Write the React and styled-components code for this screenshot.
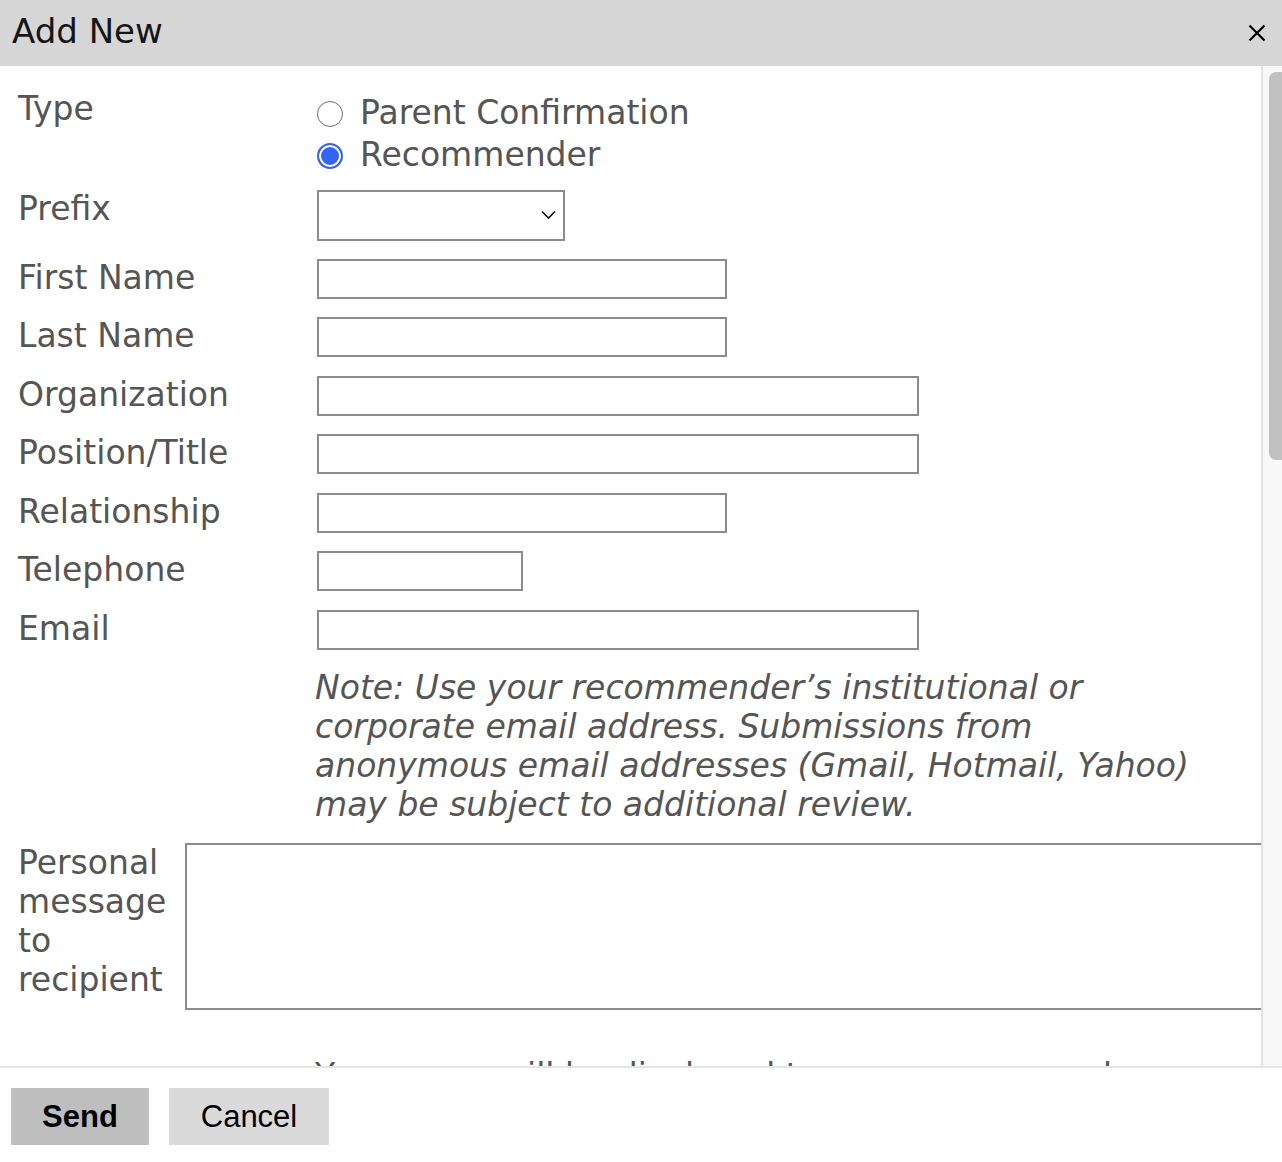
import React from "react";
import styled, { createGlobalStyle } from "styled-components";

const Global = createGlobalStyle`
  html, body { margin: 0; padding: 0; background: #fff; }
  body { font-family: "DejaVu Sans", "Noto Sans", sans-serif; }
  * { box-sizing: border-box; }
`;

const Dialog = styled.div`
  width: 1282px;
  height: 1162px;
  display: flex;
  flex-direction: column;
  background: #fff;
  overflow: hidden;
`;

const Header = styled.div`
  height: 66px;
  flex: none;
  background: #d6d6d6;
  display: flex;
  align-items: center;
  justify-content: space-between;
  padding: 0 16px 4px 12px;
`;

const Title = styled.h1`
  margin: 0;
  font-family: "DejaVu Sans", sans-serif;
  font-weight: normal;
  font-size: 34px;
  color: #151515;
  letter-spacing: 0;
`;

const CloseButton = styled.button`
  border: 0;
  background: transparent;
  padding: 0;
  width: 18px;
  height: 18px;
  margin-top: 4px;
  display: flex;
  cursor: pointer;
`;

const Body = styled.div`
  height: 1000px;
  flex: none;
  display: flex;
`;

const ScrollContent = styled.div`
  flex: 1;
  min-width: 0;
  overflow: hidden;
  padding-top: 24px;
`;

const Rail = styled.div`
  width: 21px;
  flex: none;
  background: #f8f8f8;
  border-left: 2px solid #e2e2e2;
  padding: 6px 0 0 6px;
`;

const Thumb = styled.div`
  width: 13px;
  height: 388px;
  background: #c1c1c1;
  border-radius: 7px 0 0 7px;
`;

const Form = styled.div`
  display: flex;
  flex-direction: column;
  gap: 18.5px;
  color: #555;
  font-size: 33px;
`;

const Row = styled.div`
  display: flex;
  align-items: flex-start;
  margin-bottom: ${(p) => p.$pull || 0}px;
`;

const Label = styled.label`
  flex: none;
  width: ${(p) => p.$width || 317}px;
  padding-left: 18px;
  line-height: ${(p) => p.$lh || 38}px;
  color: #555;
`;

const RadioGroup = styled.div`
  display: flex;
  flex-direction: column;
  padding-top: 2px;
`;

const RadioLine = styled.label`
  display: flex;
  align-items: center;
  gap: 17px;
  height: 42px;
  line-height: 42px;
  color: #555;
`;

const Radio = styled.input.attrs({ type: "radio" })`
  appearance: none;
  -webkit-appearance: none;
  margin: 2px 0 0 0;
  width: 26px;
  height: 26px;
  border-radius: 50%;
  border: 1.5px solid #6e6e6e;
  background: #fff;
  flex: none;
  &:checked {
    border: 2.5px solid #3563f6;
    background: #3563f6;
    box-shadow: inset 0 0 0 2px #fff;
  }
`;

const SelectWrap = styled.div`
  position: relative;
  width: 248px;
  height: 51px;
`;

const Select = styled.select`
  appearance: none;
  -webkit-appearance: none;
  width: 100%;
  height: 100%;
  border: 2px solid #8c8c8c;
  border-radius: 0;
  background: #fff;
  font-family: "DejaVu Sans", sans-serif;
  font-size: 24px;
`;

const Chevron = styled.svg`
  position: absolute;
  right: 9px;
  top: 20px;
  pointer-events: none;
`;

const TextInput = styled.input.attrs({ type: "text" })`
  width: ${(p) => p.$w}px;
  height: 40px;
  border: 2px solid #8c8c8c;
  border-radius: 0;
  margin: 0;
  padding: 0 6px;
  background: #fff;
  font-family: "DejaVu Sans", sans-serif;
  font-size: 24px;
`;

const Note = styled.p`
  margin: 0 0 0 315px;
  width: 905px;
  font-style: italic;
  font-size: 33px;
  line-height: 39px;
  color: #555;
`;

const MessageArea = styled.textarea`
  flex: none;
  width: 1120px;
  height: 167px;
  border: 2px solid #8c8c8c;
  border-radius: 0;
  margin: 0;
  resize: none;
  background: #fff;
`;

const Trailing = styled.p`
  margin: 46px 0 0 315px;
  font-size: 33px;
  line-height: 39px;
  color: #555;
  width: 905px;
`;

const Footer = styled.div`
  flex: 1;
  border-top: 2px solid #e6e6e6;
  display: flex;
  align-items: flex-start;
  gap: 20px;
  padding: 20px 11px;
`;

const Button = styled.button`
  height: 57px;
  width: ${(p) => p.$w}px;
  border: 0;
  border-radius: 0;
  background: ${(p) => (p.$primary ? "#bebebe" : "#dadada")};
  color: #000;
  font-family: "Liberation Sans", Arial, sans-serif;
  font-size: 31px;
  font-weight: ${(p) => (p.$primary ? 700 : 400)};
  padding: 0;
  cursor: pointer;
`;

const fields = [
  { label: "First Name", w: 410 },
  { label: "Last Name", w: 410 },
  { label: "Organization", w: 602 },
  { label: "Position/Title", w: 602 },
  { label: "Relationship", w: 410 },
  { label: "Telephone", w: 206 },
  { label: "Email", w: 602 },
];

export default function App() {
  return (
    <>
      <Global />
      <Dialog>
        <Header>
          <Title>Add New</Title>
          <CloseButton aria-label="Close">
            <svg width="18" height="18" viewBox="0 0 18 18">
              <path d="M1.5 1.5 L16.5 16.5 M16.5 1.5 L1.5 16.5" stroke="#000" strokeWidth="2.2" fill="none" />
            </svg>
          </CloseButton>
        </Header>
        <Body>
          <ScrollContent>
            <Form>
              <Row $pull={-4.5}>
                <Label>Type</Label>
                <RadioGroup>
                  <RadioLine>
                    <Radio name="type" />
                    Parent Confirmation
                  </RadioLine>
                  <RadioLine>
                    <Radio name="type" defaultChecked />
                    Recommender
                  </RadioLine>
                </RadioGroup>
              </Row>
              <Row $pull={-1}>
                <Label>Prefix</Label>
                <SelectWrap>
                  <Select defaultValue="">
                    <option value=""></option>
                    <option>Mr.</option>
                    <option>Ms.</option>
                    <option>Dr.</option>
                  </Select>
                  <Chevron width="15" height="10" viewBox="0 0 15 10">
                    <path d="M1 1.5 L7.5 8 L14 1.5" stroke="#111" strokeWidth="1.6" fill="none" />
                  </Chevron>
                </SelectWrap>
              </Row>
              {fields.map((f) => (
                <Row key={f.label}>
                  <Label>{f.label}</Label>
                  <TextInput $w={f.w} />
                </Row>
              ))}
              <Note>
                Note: Use your recommender’s institutional or corporate email address. Submissions from
                anonymous email addresses (Gmail, Hotmail, Yahoo) may be subject to additional review.
              </Note>
              <Row>
                <Label $width={185} $lh={39}>Personal message to recipient</Label>
                <MessageArea />
              </Row>
            </Form>
            <Trailing>Your name will be displayed to your recommender.</Trailing>
          </ScrollContent>
          <Rail>
            <Thumb />
          </Rail>
        </Body>
        <Footer>
          <Button $primary $w={138}>Send</Button>
          <Button $w={160}>Cancel</Button>
        </Footer>
      </Dialog>
    </>
  );
}
